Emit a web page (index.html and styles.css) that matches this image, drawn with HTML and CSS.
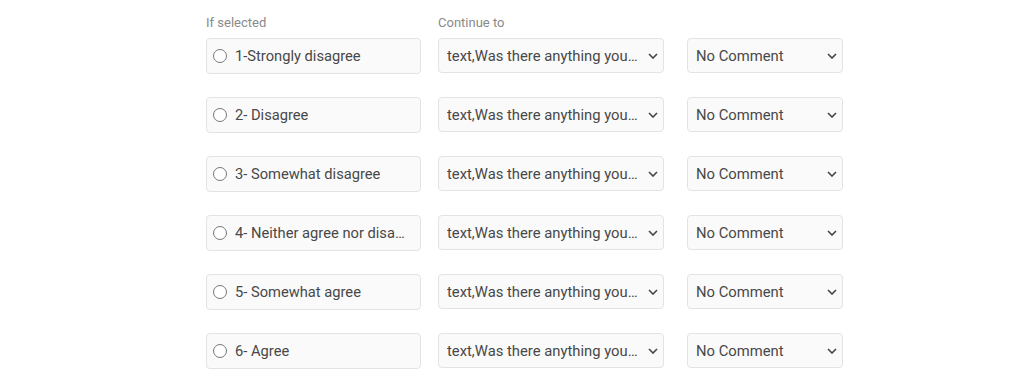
FILE: index.html
```html
<!DOCTYPE html>
<html lang="en">
<head>
    <meta charset="UTF-8">
    <meta name="viewport" content="width=device-width, initial-scale=1.0">
    <title>Answer branching</title>
    <link rel="stylesheet" href="styles.css">
</head>
<body>
    <div class="branching">
        <div class="branch-head">
            <span class="head-label col-answer">If selected</span>
            <span class="head-label col-target">Continue to</span>
        </div>

        <div class="branch-row">
            <div class="answer-box"><span class="radio"></span><span class="answer-text">1-Strongly disagree</span></div>
            <div class="select-box col-target"><span class="select-text">text,Was there anything you would like to add?</span><svg class="chevron" width="10" height="6" viewBox="0 0 10 6"><path d="M1 1l4 4 4-4" fill="none" stroke="#444" stroke-width="1.6"/></svg></div>
            <div class="select-box col-comment"><span class="select-text">No Comment</span><svg class="chevron" width="10" height="6" viewBox="0 0 10 6"><path d="M1 1l4 4 4-4" fill="none" stroke="#444" stroke-width="1.6"/></svg></div>
        </div>

        <div class="branch-row">
            <div class="answer-box"><span class="radio"></span><span class="answer-text">2- Disagree</span></div>
            <div class="select-box col-target"><span class="select-text">text,Was there anything you would like to add?</span><svg class="chevron" width="10" height="6" viewBox="0 0 10 6"><path d="M1 1l4 4 4-4" fill="none" stroke="#444" stroke-width="1.6"/></svg></div>
            <div class="select-box col-comment"><span class="select-text">No Comment</span><svg class="chevron" width="10" height="6" viewBox="0 0 10 6"><path d="M1 1l4 4 4-4" fill="none" stroke="#444" stroke-width="1.6"/></svg></div>
        </div>

        <div class="branch-row">
            <div class="answer-box"><span class="radio"></span><span class="answer-text">3- Somewhat disagree</span></div>
            <div class="select-box col-target"><span class="select-text">text,Was there anything you would like to add?</span><svg class="chevron" width="10" height="6" viewBox="0 0 10 6"><path d="M1 1l4 4 4-4" fill="none" stroke="#444" stroke-width="1.6"/></svg></div>
            <div class="select-box col-comment"><span class="select-text">No Comment</span><svg class="chevron" width="10" height="6" viewBox="0 0 10 6"><path d="M1 1l4 4 4-4" fill="none" stroke="#444" stroke-width="1.6"/></svg></div>
        </div>

        <div class="branch-row">
            <div class="answer-box"><span class="radio"></span><span class="answer-text">4- Neither agree nor disagree</span></div>
            <div class="select-box col-target"><span class="select-text">text,Was there anything you would like to add?</span><svg class="chevron" width="10" height="6" viewBox="0 0 10 6"><path d="M1 1l4 4 4-4" fill="none" stroke="#444" stroke-width="1.6"/></svg></div>
            <div class="select-box col-comment"><span class="select-text">No Comment</span><svg class="chevron" width="10" height="6" viewBox="0 0 10 6"><path d="M1 1l4 4 4-4" fill="none" stroke="#444" stroke-width="1.6"/></svg></div>
        </div>

        <div class="branch-row">
            <div class="answer-box"><span class="radio"></span><span class="answer-text">5- Somewhat agree</span></div>
            <div class="select-box col-target"><span class="select-text">text,Was there anything you would like to add?</span><svg class="chevron" width="10" height="6" viewBox="0 0 10 6"><path d="M1 1l4 4 4-4" fill="none" stroke="#444" stroke-width="1.6"/></svg></div>
            <div class="select-box col-comment"><span class="select-text">No Comment</span><svg class="chevron" width="10" height="6" viewBox="0 0 10 6"><path d="M1 1l4 4 4-4" fill="none" stroke="#444" stroke-width="1.6"/></svg></div>
        </div>

        <div class="branch-row">
            <div class="answer-box"><span class="radio"></span><span class="answer-text">6- Agree</span></div>
            <div class="select-box col-target"><span class="select-text">text,Was there anything you would like to add?</span><svg class="chevron" width="10" height="6" viewBox="0 0 10 6"><path d="M1 1l4 4 4-4" fill="none" stroke="#444" stroke-width="1.6"/></svg></div>
            <div class="select-box col-comment"><span class="select-text">No Comment</span><svg class="chevron" width="10" height="6" viewBox="0 0 10 6"><path d="M1 1l4 4 4-4" fill="none" stroke="#444" stroke-width="1.6"/></svg></div>
        </div>
    </div>
</body>
</html>
```
FILE: styles.css
```css
* {
    margin: 0;
    padding: 0;
    box-sizing: border-box;
}

body {
    font-family: Roboto, 'Liberation Sans', sans-serif;
    background: #ffffff;
    color: #484848;
}

.branching {
    padding: 6px 0 0 206px;
}

.branch-head {
    display: flex;
    height: 32px;
    align-items: center;
}

.head-label {
    font-size: 13px;
    color: #8a8a8a;
}

.col-answer {
    width: 215px;
}

.branch-row {
    display: flex;
    align-items: flex-start;
    margin-bottom: 23px;
}

.answer-box {
    width: 215px;
    height: 36px;
    display: flex;
    align-items: center;
    padding: 0 10px 0 6px;
    background: #fafafa;
    border: 1px solid #e3e3e3;
    border-radius: 4px;
    font-size: 14.7px;
}

.radio {
    flex: none;
    width: 14px;
    height: 14px;
    border: 1px solid #777777;
    border-radius: 50%;
    background: #ffffff;
    margin-right: 8px;
}

.answer-text,
.select-text {
    white-space: nowrap;
    overflow: hidden;
    text-overflow: ellipsis;
}

.select-box {
    height: 35px;
    display: flex;
    align-items: center;
    justify-content: space-between;
    padding: 0 5px 0 8px;
    background: #fafafa;
    border: 1px solid #e3e3e3;
    border-radius: 4px;
    font-size: 14.8px;
}

.select-text {
    flex: 1;
}

.chevron {
    flex: none;
    margin-left: 10px;
}

.col-target {
    width: 226px;
    margin-left: 17px;
}

.col-comment {
    width: 156px;
    margin-left: 23px;
}
```
